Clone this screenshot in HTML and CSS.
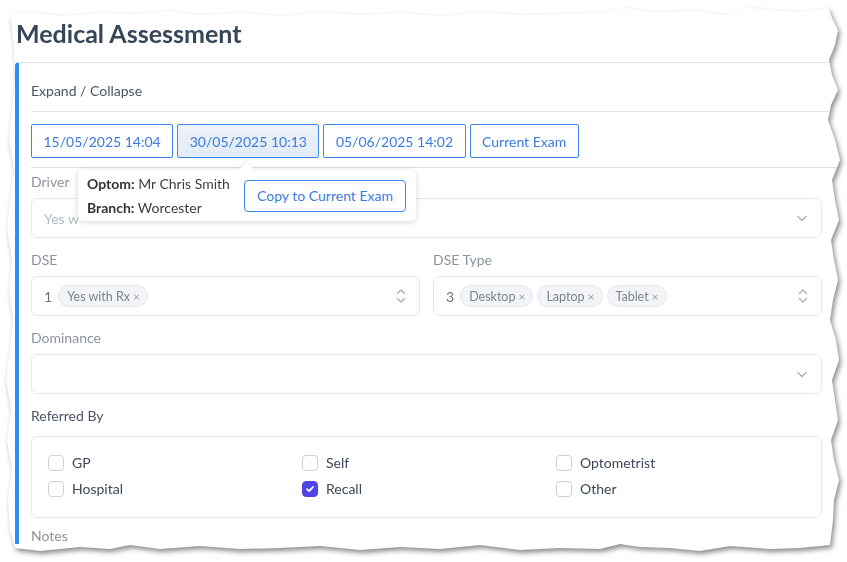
FILE: index.html
```html
<!DOCTYPE html>
<html>
<head>
<meta charset="utf-8">
<link rel="stylesheet" href="styles.css">
</head>
<body>
<div class="sheet">
  <div class="paper">
    <h1 class="title">Medical Assessment</h1>
    <div class="card">
      <div class="card-head">Expand / Collapse</div>
      <div class="exam-row">
        <button class="exam-btn">15/05/2025 14:04</button>
        <button class="exam-btn active">30/05/2025 10:13</button>
        <button class="exam-btn">05/06/2025 14:02</button>
        <button class="exam-btn">Current Exam</button>
        <div class="popover">
          <div class="pop-info">
            <div><b>Optom:</b> Mr Chris Smith</div>
            <div><b>Branch:</b> Worcester</div>
          </div>
          <button class="copy-btn">Copy to Current Exam</button>
        </div>
      </div>
      <div class="form">
        <div class="field">
          <div class="label">Driver</div>
          <div class="select">
            <span class="placeholder">Yes w</span>
            <svg class="chev" width="12" height="12" viewBox="0 0 12 12"><path d="M2 4.5 L6 8.5 L10 4.5" fill="none" stroke="#a9b2bf" stroke-width="1.4" stroke-linecap="round" stroke-linejoin="round"/></svg>
          </div>
        </div>
        <div class="row2">
          <div class="field">
            <div class="label">DSE</div>
            <div class="select">
              <span class="count">1</span>
              <span class="chip">Yes with Rx <span class="x">×</span></span>
              <svg class="updown" width="12" height="18" viewBox="0 0 12 18"><path d="M2.5 6.5 L6 3 L9.5 6.5 M2.5 11.5 L6 15 L9.5 11.5" fill="none" stroke="#a9b2bf" stroke-width="1.4" stroke-linecap="round" stroke-linejoin="round"/></svg>
            </div>
          </div>
          <div class="field">
            <div class="label">DSE Type</div>
            <div class="select">
              <span class="count">3</span>
              <span class="chip">Desktop <span class="x">×</span></span>
              <span class="chip">Laptop <span class="x">×</span></span>
              <span class="chip">Tablet <span class="x">×</span></span>
              <svg class="updown" width="12" height="18" viewBox="0 0 12 18"><path d="M2.5 6.5 L6 3 L9.5 6.5 M2.5 11.5 L6 15 L9.5 11.5" fill="none" stroke="#a9b2bf" stroke-width="1.4" stroke-linecap="round" stroke-linejoin="round"/></svg>
            </div>
          </div>
        </div>
        <div class="field">
          <div class="label">Dominance</div>
          <div class="select">
            <svg class="chev" width="12" height="12" viewBox="0 0 12 12"><path d="M2 4.5 L6 8.5 L10 4.5" fill="none" stroke="#a9b2bf" stroke-width="1.4" stroke-linecap="round" stroke-linejoin="round"/></svg>
          </div>
        </div>
        <div class="label dark">Referred By</div>
        <div class="checks">
          <label class="check"><span class="box"></span>GP</label>
          <label class="check"><span class="box"></span>Self</label>
          <label class="check"><span class="box"></span>Optometrist</label>
          <label class="check"><span class="box"></span>Hospital</label>
          <label class="check"><span class="box on"><svg width="10" height="10" viewBox="0 0 10 10"><path d="M2 5.2 L4.1 7.2 L8 3" fill="none" stroke="#fff" stroke-width="1.8" stroke-linecap="round" stroke-linejoin="round"/></svg></span>Recall</label>
          <label class="check"><span class="box"></span>Other</label>
        </div>
        <div class="label notes">Notes</div>
      </div>
    </div>
  </div>
</div>
</body>
</html>
```
FILE: styles.css
```css
* { box-sizing: border-box; }
html, body { margin: 0; padding: 0; background: #ffffff; }
body {
  font-family: "Lato", "Noto Sans", sans-serif;
  width: 847px;
  height: 562px;
  overflow: hidden;
}
.sheet {
  width: 847px;
  height: 562px;
  filter: drop-shadow(2px 3px 2.5px rgba(0,0,0,0.45));
}
.paper {
  width: 847px;
  height: 562px;
  background: #ffffff;
  overflow: hidden;
  padding: 20px 0 0 16px;
  clip-path: polygon(
    10px 15px, 30px 12px, 60px 16px, 100px 13px, 140px 14px, 170px 11px, 200px 15px, 240px 13px,
    280px 16px, 320px 12px, 360px 15px, 400px 13px, 440px 16px, 480px 12px, 520px 15px, 560px 14px,
    600px 13px, 625px 8px, 650px 12px, 700px 11px, 710px 13px, 725px 15px, 745px 7px, 770px 10px,
    800px 12px, 828px 8px,
    833px 20px, 838px 30px, 835px 45px, 829px 60px, 832px 75px, 838px 90px, 831px 105px, 828px 120px,
    835px 140px, 840px 160px, 832px 180px, 835px 200px, 839px 220px, 831px 240px, 834px 260px,
    838px 280px, 833px 300px, 830px 320px, 836px 340px, 839px 360px, 832px 380px, 835px 400px,
    838px 420px, 831px 440px, 834px 460px, 839px 480px, 834px 500px, 833px 520px, 830px 545px,
    800px 548px, 770px 549px, 730px 546px, 700px 551px, 670px 548px, 640px 547px, 620px 544px,
    600px 549px, 560px 548px, 520px 550px, 480px 545px, 440px 549px, 400px 547px, 360px 550px,
    320px 546px, 280px 548px, 240px 549px, 200px 546px, 160px 549px, 130px 545px, 110px 549px,
    80px 547px, 40px 551px, 15px 548px,
    10px 530px, 8px 500px, 12px 470px, 7px 440px, 11px 410px, 6px 380px, 10px 350px, 13px 320px,
    9px 290px, 12px 260px, 7px 230px, 10px 200px, 14px 170px, 9px 140px, 12px 110px, 15px 80px,
    14px 50px, 12px 30px
  );
}
.title {
  margin: 0;
  height: 42px;
  font-size: 25px;
  line-height: 26px;
  font-weight: 700;
  color: #364558;
}
.card {
  margin-left: -1px;
  width: 860px;
  border-left: 4px solid #2d8ff0;
  border-top: 1px solid #dfe5ed;
  border-top-left-radius: 4px;
  padding-left: 12px;
}
.card-head {
  height: 49px;
  padding-top: 6px;
  display: flex;
  align-items: center;
  font-size: 14px;
  color: #4a5566;
  border-bottom: 1px solid #dfe5ed;
}
.exam-row {
  position: relative;
  display: flex;
  gap: 4px;
  padding: 12px 0 9px;
  border-bottom: 1px solid #d8dee6;
}
.exam-btn {
  height: 34px;
  padding: 0 11.5px;
  font-family: inherit;
  font-size: 14px;
  color: #3b7bdd;
  background: #ffffff;
  border: 1px solid #3d86f0;
  border-radius: 2px;
}
.exam-btn.active {
  background: linear-gradient(#eef3fb, #e1eaf7);
}
.popover {
  position: absolute;
  left: 47px;
  top: 58px;
  width: 338px;
  height: 51px;
  background: #ffffff;
  border-radius: 5px;
  box-shadow: 0 1px 6px rgba(0,0,0,0.16);
  display: flex;
  align-items: center;
  padding: 0 10px 0 9px;
  gap: 12px;
  z-index: 5;
}
.popover::before {
  content: "";
  position: absolute;
  left: 163px;
  top: -6px;
  width: 12px;
  height: 12px;
  background: #ffffff;
  transform: rotate(45deg);
  box-shadow: -1px -1px 2px rgba(0,0,0,0.06);
}
.pop-info {
  font-size: 14px;
  line-height: 24px;
  color: #3a3f47;
  position: relative;
}
.pop-info b { font-weight: 700; color: #2f343b; }
.copy-btn {
  margin-left: auto;
  height: 32px;
  width: 162px;
  font-family: inherit;
  font-size: 14px;
  color: #3b7bdd;
  background: #ffffff;
  border: 1px solid #3d86f0;
  border-radius: 4px;
  position: relative;
}
.form {
  width: 791px;
  padding-top: 6px;
}
.field { margin-bottom: 14px; }
.label {
  font-size: 14px;
  line-height: 16px;
  color: #8b939e;
  margin-bottom: 8px;
}
.label.dark { color: #4a5566; margin-bottom: 12px; }
.label.notes { margin-top: 10px; }
.select {
  position: relative;
  height: 40px;
  border: 1px solid #e3e8ef;
  border-radius: 6px;
  display: flex;
  align-items: center;
  padding: 0 12px;
  gap: 4px;
}
.placeholder { font-size: 14px; color: #b3bac4; }
.chev { position: absolute; right: 13px; top: 13px; }
.updown { position: absolute; right: 12px; top: 10px; }
.row2 {
  display: grid;
  grid-template-columns: 1fr 1fr;
  gap: 13px;
}
.count { font-size: 14px; color: #6b7280; margin-right: 2px; }
.chip {
  height: 22px;
  border-radius: 11px;
  background: #f2f4f7;
  border: 1px solid #e3e7ec;
  padding: 0 7px 0 8px;
  display: inline-flex;
  align-items: center;
  font-size: 12.5px;
  color: #7b8491;
}
.chip .x { margin-left: 3px; color: #9aa3ae; font-size: 12px; }
.checks {
  border: 1px solid #e3e8ef;
  border-radius: 6px;
  padding: 18px 16px 20px 16px;
  display: grid;
  grid-template-columns: 254px 254px 1fr;
  row-gap: 10px;
}
.check {
  display: flex;
  align-items: center;
  gap: 8px;
  font-size: 14px;
  line-height: 16px;
  color: #3c4757;
}
.box {
  width: 16px;
  height: 16px;
  border: 1px solid #c9d2de;
  border-radius: 4px;
  background: #fff;
  display: inline-flex;
  align-items: center;
  justify-content: center;
}
.box.on { background: #4f46e5; border-color: #4f46e5; }
```
